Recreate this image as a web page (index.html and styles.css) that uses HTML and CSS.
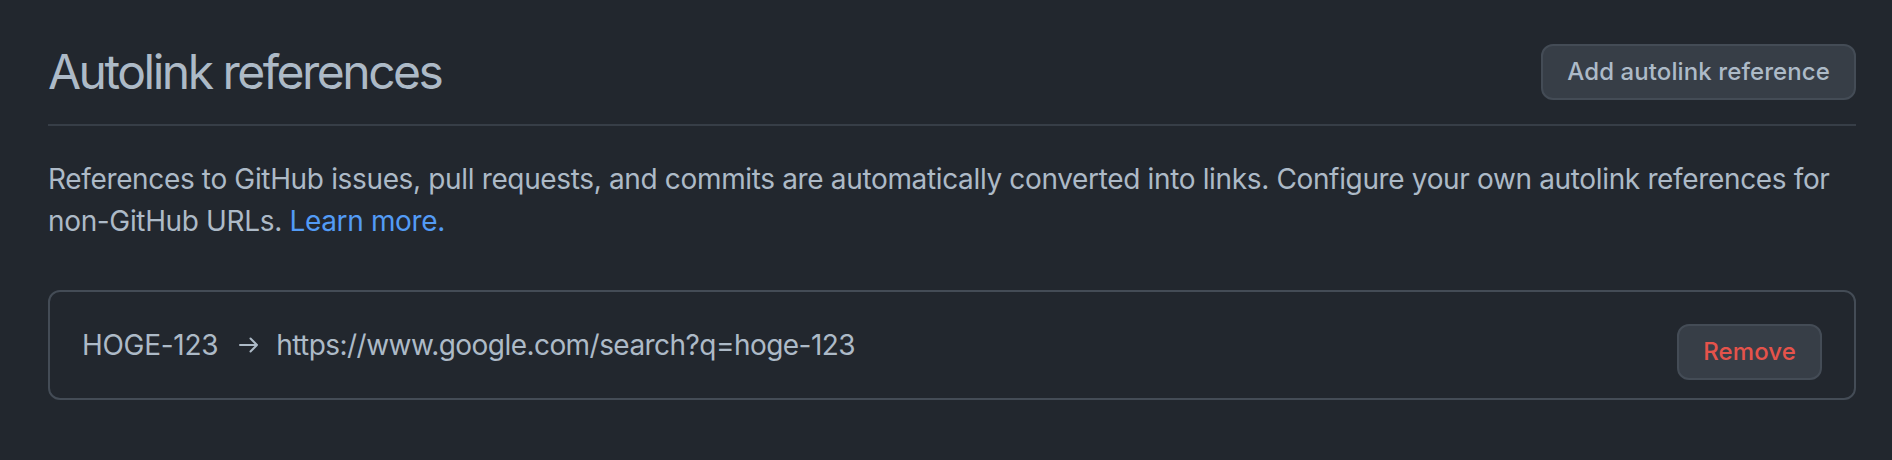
FILE: index.html
```html
<!DOCTYPE html>
<html lang="en">
<head>
<meta charset="utf-8">
<title>Autolink references</title>
<link rel="stylesheet" href="styles.css">
</head>
<body>
<main class="page">
  <div class="subhead">
    <h2 class="subhead-heading">Autolink references</h2>
    <button class="btn" type="button">Add autolink reference</button>
  </div>
  <p class="note">References to GitHub issues, pull requests, and commits are automatically converted into links. Configure your own autolink references for non-GitHub URLs. <a class="link" href="#">Learn more.</a></p>
  <div class="box">
    <div class="box-row">
      <div class="ref">
        <span class="prefix">HOGE-123</span>
        <svg class="arrow" width="20" height="16" viewBox="0 0 20 16" aria-hidden="true"><path d="M1 8H18M11.5 1.5L18 8L11.5 14.5" fill="none" stroke="currentColor" stroke-width="2" stroke-linecap="round" stroke-linejoin="round"/></svg>
        <span class="url">https://www.google.com/search?q=hoge-123</span>
      </div>
      <button class="btn btn-danger" type="button">Remove</button>
    </div>
  </div>
</main>
</body>
</html>
```
FILE: styles.css
```css
html, body {
  margin: 0;
  padding: 0;
  background: #22272e;
}
body {
  font-family: Inter, "Noto Sans", "Liberation Sans", sans-serif;
  color: #adbac7;
}
.page {
  padding: 36px 36px 0 48px;
}
.subhead {
  display: flex;
  align-items: center;
  justify-content: space-between;
  padding-bottom: 16px;
  border-bottom: 2px solid #373e47;
}
.subhead-heading {
  margin: 0;
  font-size: 48px;
  font-weight: 400;
  line-height: 72px;
  letter-spacing: -2.5px;
}
.btn {
  font-family: inherit;
  font-size: 24px;
  font-weight: 500;
  line-height: 40px;
  padding: 6px 24px;
  border: 2px solid #444c56;
  border-radius: 12px;
  background: #373e47;
  color: #adbac7;
  cursor: pointer;
  letter-spacing: 0.1px;
}
.btn-danger {
  color: #e5534b;
}
.note {
  margin: 32px 0 0;
  font-size: 28px;
  line-height: 42px;
  letter-spacing: -0.35px;
}
.link {
  color: #539bf5;
  text-decoration: none;
}
.box {
  margin-top: 48px;
  border: 2px solid #444c56;
  border-radius: 12px;
}
.box-row {
  display: flex;
  align-items: flex-start;
  justify-content: space-between;
  padding: 32px;
}
.ref {
  display: flex;
  align-items: center;
  font-size: 28px;
  line-height: 42px;
  letter-spacing: -0.3px;
}
.url {
  letter-spacing: -0.55px;
}
.arrow {
  margin: 0 17px 0 21px;
}
.box-row .btn {
  margin-bottom: -14px;
}
```
